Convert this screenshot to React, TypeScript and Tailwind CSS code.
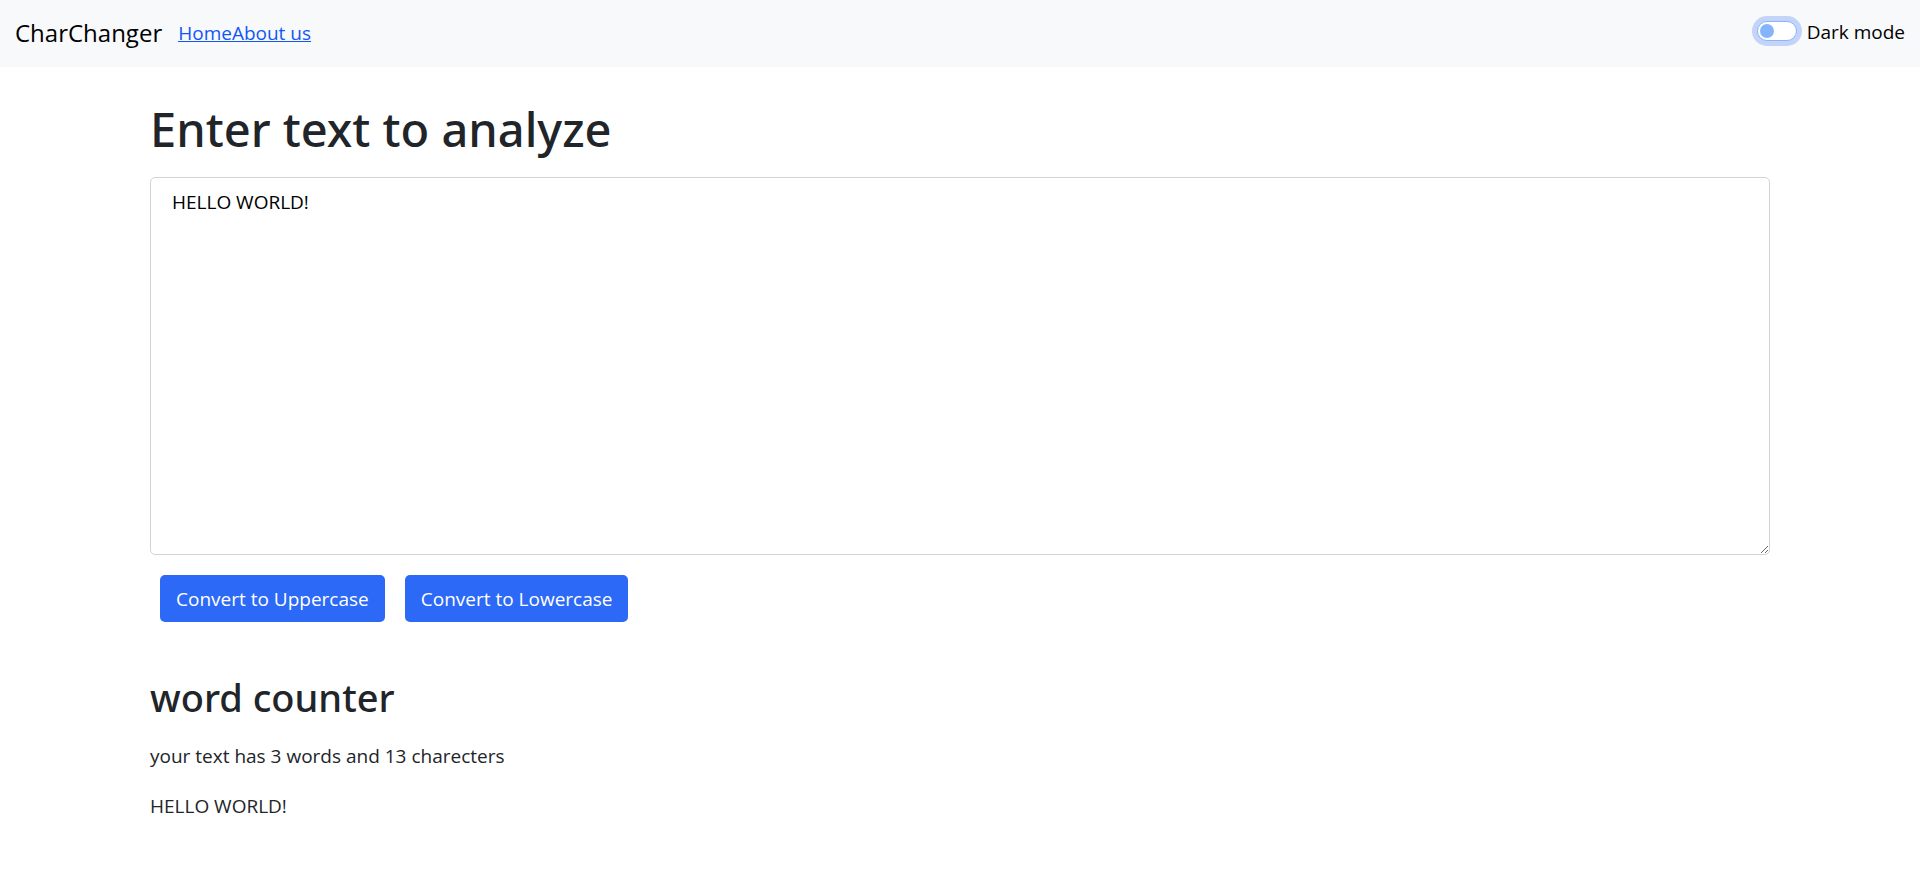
import { useState } from 'react';

export default function App() {
  const [text, setText] = useState('HELLO WORLD!');
  const [dark, setDark] = useState(false);
  const characters = 13;
  const words = 3;

  return (
    <div className="min-h-screen bg-white font-['Open_Sans','Noto_Sans',sans-serif] text-[19px] leading-[30px] text-[#212529]">
      <nav className="flex items-center bg-[#f8f9fb] px-[15px] pt-[13px] pb-[15px]">
        <a href="#" className="mr-4 text-[24px] leading-[39px] text-black">
          CharChanger
        </a>
        <div className="flex grow text-[#1257f5] underline">
          <a href="#home">Home</a>
          <a href="#about">About us</a>
        </div>
        <div className="flex items-start gap-[10px] pb-[2px]">
          <input
            id="dark-mode"
            type="checkbox"
            role="switch"
            checked={dark}
            onChange={(e) => setDark(e.target.checked)}
            className="mt-1 flex h-5 w-10 appearance-none items-center rounded-full border border-[#86b7fe] bg-white px-[2px] ring-[5px] ring-[#c3d4f8] outline-none before:size-[14px] before:rounded-full before:bg-[#86b4fb] before:content-[''] checked:justify-end"
          />
          <label htmlFor="dark-mode" className="text-black">
            Dark mode
          </label>
        </div>
      </nav>

      <main className="mx-auto w-full max-w-[1650px] px-[15px] pt-8">
        <h1 className="mb-[18px] font-['Noto_Sans','Open_Sans',sans-serif] text-[47px] leading-[60px] font-medium">
          <label htmlFor="text">Enter text to analyze</label>
        </h1>
        <textarea
          id="text"
          rows={12}
          value={text}
          onChange={(e) => setText(e.target.value)}
          className="block w-full resize-y rounded-[5px] border border-[#ced4da] bg-white px-[21px] pt-[9px] pb-[7px] text-black outline-none"
        />
        <div className="flex gap-5 px-[10px] pt-5">
          <button
            type="button"
            onClick={() => setText(text.toUpperCase())}
            className="rounded-[5px] bg-[#2b69f6] px-4 pt-[10px] pb-2 leading-[29px] text-white"
          >
            Convert to Uppercase
          </button>
          <button
            type="button"
            onClick={() => setText(text.toLowerCase())}
            className="rounded-[5px] bg-[#2b69f6] px-4 pt-[10px] pb-2 leading-[29px] text-white"
          >
            Convert to Lowercase
          </button>
        </div>

        <section className="pt-[51px]">
          <h2 className="mb-5 font-['Noto_Sans','Open_Sans',sans-serif] text-[38px] leading-[48px] font-medium">
            word counter
          </h2>
          <p className="mb-5">
            your text has {words} words and {characters} charecters
          </p>
          <p>{text}</p>
        </section>
      </main>
    </div>
  );
}
